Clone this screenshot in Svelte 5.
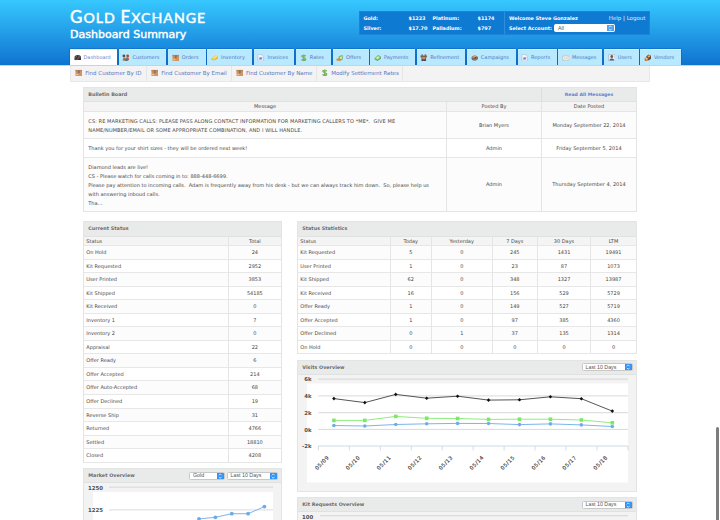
<script>
  const tabs = [
    { label: 'Dashboard', icon: 'gauge', w: 47 },
    { label: 'Customers', icon: 'people', w: 47.5 },
    { label: 'Orders', icon: 'box', w: 37.3 },
    { label: 'Inventory', icon: 'gold', w: 44.7 },
    { label: 'Invoices', icon: 'doc', w: 40.5 },
    { label: 'Rates', icon: 'dollar', w: 34.3 },
    { label: 'Offers', icon: 'offer', w: 36 },
    { label: 'Payments', icon: 'cash', w: 44.5 },
    { label: 'Refinement', icon: 'plant', w: 48.7 },
    { label: 'Campaigns', icon: 'ball', w: 48.3 },
    { label: 'Reports', icon: 'doc', w: 39 },
    { label: 'Messages', icon: 'mail', w: 44 },
    { label: 'Users', icon: 'user', w: 34.3 },
    { label: 'Vendors', icon: 'vendor', w: 40.7 }
  ];
  const links = [
    { label: 'Find Customer By ID', icon: 'box', w: 76 },
    { label: 'Find Customer By Email', icon: 'box', w: 84.7 },
    { label: 'Find Customer By Name', icon: 'box', w: 85.2 },
    { label: 'Modify Settlement Rates', icon: 'dollar', w: 86.6 }
  ];
  const current = [
    ['On Hold', 24], ['Kit Requested', 2952], ['User Printed', 3853], ['Kit Shipped', 54185],
    ['Kit Received', 0], ['Inventory 1', 7], ['Inventory 2', 0], ['Appraisal', 22],
    ['Offer Ready', 6], ['Offer Accepted', 214], ['Offer Auto-Accepted', 68], ['Offer Declined', 19],
    ['Reverse Ship', 31], ['Returned', 4766], ['Settled', 18810], ['Closed', 4208]
  ];
  const statHead = ['Status', 'Today', 'Yesterday', '7 Days', '30 Days', 'LTM'];
  const stats = [
    ['Kit Requested', 5, 0, 245, 1431, 19491],
    ['User Printed', 1, 0, 23, 87, 1073],
    ['Kit Shipped', 62, 0, 348, 1327, 13987],
    ['Kit Received', 16, 0, 156, 529, 5729],
    ['Offer Ready', 1, 0, 149, 527, 5719],
    ['Offer Accepted', 1, 0, 97, 385, 4360],
    ['Offer Declined', 0, 1, 37, 135, 1314],
    ['On Hold', 0, 0, 0, 0, 0]
  ];
  // chart coordinates are relative to the top left corner of the chart area
  const step = 30.93;
  const xs = Array.from({ length: 10 }, (_, i) => 35.9 + i * step);
  const dates = ['05/09', '05/10', '05/11', '05/12', '05/13', '05/14', '05/15', '05/16', '05/17', '05/18'];
  const black = [24.2, 28.2, 20, 23.8, 21.8, 25.7, 25.4, 22.4, 24.3, 36.7];
  const green = [46, 46, 42, 43.9, 44.1, 45, 44.8, 44.8, 45.6, 48.4];
  const blue = [51.1, 51.6, 50.1, 49.4, 49, 49.1, 50.2, 49.5, 50.5, 52.1];
  const ylabels = [['6k', 4.7], ['4k', 21.5], ['2k', 38.3], ['0k', 55], ['-2k', 71.6]];
  const market = [[115, 35.9], [131.4, 34.3], [147.8, 30.7], [164.1, 30.7], [180.4, 23.6]];
  const line = (ys) => ys.map((y, i) => `${xs[i]},${y}`).join(' ');
</script>

{#snippet icon(kind)}
  <svg class="icon" viewBox="0 0 16 16">
    {#if kind === 'gauge'}
      <path d="M1 13V8a7 6 0 0 1 14 0v5z" fill="#343638" /><path d="M3 8l3-4M10 4l3 4" stroke="#8b8f94" stroke-width="1.5" /><path d="M7 12l3-5" stroke="#e34b43" stroke-width="2" /><rect x="2" y="11" width="4" height="2" fill="#b13b39" />
    {:else if kind === 'people'}
      <path d="M1 14l2-6 4-1 2 4 2-4 4 1v5l-4 2z" fill="#a67745" /><path d="M7 15l1-8 4 1-1 7z" fill="#536b82" /><circle cx="4" cy="4" r="3" fill="#475160" /><circle cx="12" cy="4" r="3" fill="#a64c32" /><circle cx="8" cy="7" r="2.4" fill="#eebc87" />
    {:else if kind === 'box'}
      <path d="M1 2h14v13H1z" fill="#d2955f" /><path d="M1 2h14v3H1z" fill="#b98660" /><path d="M6 3h4v6H6z" fill="#8d6f5d" /><path d="M2 12h5" stroke="#f3cb9f" stroke-width="2" />
    {:else if kind === 'gold'}
      <path d="M1 9l9-6 6 2-2 5-8 4-5-2z" fill="#e2b735" /><path d="M2 9l8-5 5 1-8 5z" fill="#ffe876" /><path d="M5 13l2-3" stroke="#fff5ba" />
    {:else if kind === 'doc'}
      <path d="M2 1h8l4 4v10H2z" fill="#f5f6fc" stroke="#9da7c2" /><path d="M10 1v4h4" fill="#c6cfe2" /><path d="M5 7h6v5H5z" fill="#819fd2" /><path d="M6 12V9l2 1 3-3" stroke="#5376b6" fill="none" />
    {:else if kind === 'dollar'}
      <path d="M12 5C11 2 4 2 4 5s8 2.500 8 6-7 3.500-8.500 0M8 1v14" fill="none" stroke="#74ac58" stroke-width="3" /><path d="M11 5C10 3 5 3 5 5s7 3 6.500 6" fill="none" stroke="#a3cf86" />
    {:else if kind === 'offer'}
      <path d="M5 6l6-4 4 4-1 6-6 3z" fill="#78b96b" /><path d="M8 7l4-2 1 4-4 2z" fill="#d7f0bf" /><path d="M1 10l5-1 6 2-4 4-7-1z" fill="#df8b3f" /><path d="M11 2h4v4z" fill="#d5ba4d" />
    {:else if kind === 'cash'}
      <path d="M1 9l8-7 6 4v4l-8 5-6-4z" fill="#67a766" /><path d="M2 9l7-6 5 4-7 5z" fill="#a9d894" /><circle cx="8" cy="8" r="2" fill="#dff0cf" />
    {:else if kind === 'plant'}
      <path d="M1 3h14v4h-2v8H3V7H1z" fill="#806051" /><path d="M3 3V1h3v2M10 3V1h3v2" fill="#48403e" /><path d="M5 7h6v3H5z" fill="#f0a15b" /><path d="M4 12h3v3H4zM9 12h3v3H9z" fill="#373c46" />
    {:else if kind === 'ball'}
      <ellipse cx="8" cy="8.500" rx="7" ry="5.500" fill="#746b67" /><path d="M2 7l5-4 6 2-5 4z" fill="#c7a485" /><path d="M4 12l5-3 5 1-4 4z" fill="#bc6842" /><circle cx="9" cy="8" r="1.700" fill="#333" />
    {:else if kind === 'mail'}
      <rect x="1" y="4" width="14" height="10" rx="1" fill="#f2f2e9" stroke="#a7b4b8" /><path d="M2 5l6 5 6-5M2 13l4-4M14 13l-4-4" fill="none" stroke="#b7b9b5" />
    {:else if kind === 'user'}
      <rect x="1" y="1" width="14" height="14" rx="1" fill="#e7edf5" stroke="#8da2b8" /><circle cx="8" cy="6" r="3" fill="#9b623e" /><path d="M3 14c0-6 10-6 10 0z" fill="#315c92" /><path d="M5 5q3-5 6 0z" fill="#403531" />
    {:else}
      <path d="M5 5l5-4 5 3v6l-5 4-5-3z" fill="#5e473c" /><path d="M7 5l4-3 3 3-4 3z" fill="#eba75d" /><path d="M1 9l5-2 4 3-3 5H2z" fill="#c87834" /><path d="M3 9l3-1 2 2-3 2z" fill="#f1d593" />
    {/if}
  </svg>
{/snippet}

{#snippet select(label, cls)}
  <div class="select {cls}">
    <span>{label}</span>
    <svg viewBox="0 0 7 8"><path d="M2 3.300L3.500 1.700 5 3.300M2 4.900l1.500 1.600L5 4.900" fill="none" stroke="#fff" stroke-width=".8" /></svg>
  </div>
{/snippet}

<div class="page">
  <header>
    <div class="wrap">
      <div class="top">
        <div class="brand">
          <div class="name"><span>G</span>OLD <span>E</span>XCHANGE</div>
          <h1>Dashboard Summary</h1>
        </div>
        <div class="info">
          <div class="prices">
            <div><b class="c1">Gold:</b><b class="c2">$1223</b><b class="c3">Platinum:</b><b>$1174</b></div>
            <div><b class="c1">Silver:</b><b class="c2">$17.70</b><b class="c3">Palladium:</b><b>$797</b></div>
          </div>
          <div class="account">
            <div><b>Welcome Steve Gonzalez</b><span class="right"><i>Help</i> <em>|</em> <i>Logout</i></span></div>
            <div><b>Select Account:</b>{@render select('All', 'acct')}</div>
          </div>
        </div>
      </div>
      <nav>
        {#each tabs as t, i}
          <div class="tab" class:active={i === 0} style:width="{t.w}px">{@render icon(t.icon)}<span>{t.label}</span></div>
        {/each}
      </nav>
    </div>
  </header>

  <div class="wrap body">
    <div class="subnav">
      {#each links as l}
        <div class="link" style:width="{l.w}px">{@render icon(l.icon)}<span>{l.label}</span></div>
      {/each}
    </div>

    <main>
      <section class="board">
        <div class="head"><b>Bulletin Board</b><b class="all">Read All Messages</b></div>
        <div class="brow th"><div>Message</div><div>Posted By</div><div>Date Posted</div></div>
        <div class="brow r1 odd">
          <div>CS: RE MARKETING CALLS: PLEASE PASS ALONG CONTACT INFORMATION FOR MARKETING CALLERS TO *ME*.&nbsp; GIVE ME<br />NAME/NUMBER/EMAIL OR SOME APPROPRIATE COMBINATION, AND I WILL HANDLE.</div>
          <div>Brian Myers</div><div>Monday September 22, 2014</div>
        </div>
        <div class="brow r2">
          <div>Thank you for your shirt sizes - they will be ordered next week!</div>
          <div>Admin</div><div>Friday September 5, 2014</div>
        </div>
        <div class="brow r3 odd">
          <div>Diamond leads are live!<br />CS - Please watch for calls coming in to: 888-448-6699.<br />Please pay attention to incoming calls.&nbsp; Adam is frequently away from his desk - but we can always track him down.&nbsp; So, please help us<br />with answering inboud calls.<br />Tha...</div>
          <div>Admin</div><div>Thursday September 4, 2014</div>
        </div>
      </section>

      <div class="cols">
        <div class="left">
          <section class="table">
            <div class="head"><b>Current Status</b></div>
            <div class="row two th"><div>Status</div><div>Total</div></div>
            {#each current as r, i}
              <div class="row two" class:odd={i % 2 === 0}><div>{r[0]}</div><div>{r[1]}</div></div>
            {/each}
          </section>
          <section class="panel market">
            <div class="head"><b>Market Overview</b>{@render select('Gold', 'gold')}{@render select('Last 10 Days', 'days')}</div>
            <svg class="chart" width="197" height="60" viewBox="0 0 197 60">
              <rect x="9" y="9" width="180" height="51" fill="#fff" />
              <path d="M25 4.200h164M25 26.900h164" stroke="#ccc" stroke-width=".7" />
              <text x="4" y="7">1250</text><text x="4" y="29.300">1225</text>
              <polyline points={market.map((p) => p.join(',')).join(' ')} class="ln" stroke="#7cb5ec" />
              {#each market as p}<circle cx={p[0]} cy={p[1]} r="1.900" fill="#6fa9e8" />{/each}
            </svg>
          </section>
        </div>
        <div class="rightcol">
          <section class="table">
            <div class="head"><b>Status Statistics</b></div>
            <div class="row six th">{#each statHead as h}<div>{h}</div>{/each}</div>
            {#each stats as r, i}
              <div class="row six" class:odd={i % 2 === 0}>{#each r as c}<div>{c}</div>{/each}</div>
            {/each}
          </section>
          <section class="panel visits">
            <div class="head"><b>Visits Overview</b>{@render select('Last 10 Days', 'days')}</div>
            <svg class="chart" width="338" height="116" viewBox="0 .6 338 116">
              <rect x="9" y="9" width="321" height="99" fill="#fff" />
              <path d="M20.300 4.700H330M20.300 21.500H330M20.300 38.300H330M20.300 55H330" stroke="#c8c8c8" stroke-width=".7" />
              <path d="M20.300 71.600H330" stroke="#c0d0e0" stroke-width=".8" />
              {#each Array(11) as _, i}<path d="M{20.4 + i * 30.95} 71.600v4.500" stroke="#c0d0e0" stroke-width=".7" />{/each}
              {#each ylabels as [t, y]}<text x="13.500" y={y + 2.4} text-anchor="end">{t}</text>{/each}
              {#each dates as d, i}<text class="date" text-anchor="end" transform="translate({xs[i] - 4.4} 83.500) rotate(-45)">{d}</text>{/each}
              <polyline points={line(blue)} class="ln" stroke="#7cb5ec" />
              <polyline points={line(black)} class="ln" stroke="#555" />
              <polyline points={line(green)} class="ln" stroke="#90ed7d" />
              {#each xs as x, i}
                <circle cx={x} cy={blue[i]} r="1.800" fill="#70ace9" />
                <path d="M{x} {black[i] - 1.8}l1.800 1.800-1.800 1.800-1.800-1.800z" fill="#111" />
                <rect x={x - 1.8} y={green[i] - 1.8} width="3.600" height="3.600" fill="#7de867" />
              {/each}
            </svg>
          </section>
          <section class="panel kits">
            <div class="head"><b>Kit Requests Overview</b>{@render select('Last 10 Days', 'days')}</div>
            <svg class="chart" width="338" height="20" viewBox="0 0 338 20">
              <path d="M22 3.700h308" stroke="#c8c8c8" stroke-width=".7" />
              <text x="4" y="6.600">100</text>
            </svg>
          </section>
        </div>
      </div>
    </main>
  </div>
  <div class="thumb"></div>
</div>

<style>
  :global(body) { margin: 0; overflow: hidden; }
  .page { position: relative; width: 720px; height: 520px; overflow: hidden; background: #fff; color: #484848; font: 5.020px/9px "DejaVu Sans", Verdana, sans-serif; }
  .page :global(*) { box-sizing: border-box; }
  header { height: 65.500px; background: linear-gradient(#37c8ff, #0f73d0); border-bottom: .7px solid #b5d8f5; }
  .wrap { width: 580px; margin-left: 70px; }
  header .wrap { width: 640px; }
  .top { display: flex; height: 49px; }
  .brand { width: 289px; color: #fff; white-space: nowrap; padding-top: 8px; }
  .name { height: 19px; font: 500 14.200px/19px Lato, sans-serif; letter-spacing: .980px; -webkit-text-stroke: .35px #fff; }
  .name span { font-size: 17px; line-height: 18px; }
  h1 { margin: 1px 0 0; font: 11px/14px "DejaVu Sans", sans-serif; -webkit-text-stroke: .45px #fff; }
  .info { display: flex; width: 291px; height: 24px; margin-top: 11px; background: #0f7ad2; border: 1px solid #1b84d8; color: #fff; white-space: nowrap; font-size: 4.900px; }
  .prices { width: 145px; border-right: 1px solid #2f8fdd; padding: 2px 0 0 3.500px; }
  .prices > div, .account > div { display: flex; align-items: center; height: 9.500px; }
  .c1 { width: 45px; }
  .c2 { width: 24px; }
  .c3 { width: 45px; }
  .account { flex: 1; padding: 2px 3.500px 0 4px; }
  .right { margin-left: auto; font-size: 5.500px; }
  .right i { font-style: normal; color: #d5efff; }
  .right em { font-style: normal; }
  nav { display: flex; gap: 1.880px; height: 16px; }
  .tab { display: flex; align-items: center; flex: none; height: 16px; padding-left: 3.500px; background: #b8e9ff; border-top: 1px solid #d5f3ff; box-shadow: -.5px -.5px 0 #0b62c4, .5px 0 0 #0b62c4; color: #4d78c4; white-space: nowrap; }
  .tab.active { background: #fff; color: #6f80c8; }
  .icon { width: 7.500px; height: 7.500px; flex: none; margin-right: 2.500px; }
  .body { height: 454px; }
  .subnav { display: flex; height: 16px; background: #f3f3f3; border: .8px solid #e8e8e8; border-top: 0; }
  .link { display: flex; align-items: center; flex: none; padding-left: 4px; border-right: 1px solid #e6e6e6; color: #5577c5; font-size: 5.500px; white-space: nowrap; }
  .link .icon { margin-right: 2.800px; }
  main { padding: 5.500px 13px 0; }
  section { border: 1px solid #e3e5e5; white-space: nowrap; }
  .board { height: 125px; width: 554px; }
  .head { display: flex; align-items: center; height: 14.500px; padding-left: 4.300px; background: #e9ebeb; border-bottom: 1px solid #e0e2e2; color: #6c6c6c; font-size: 4.850px; }
  .board .head { height: 14px; }
  .all { width: 95px; height: 100%; margin-left: auto; display: flex; align-items: center; justify-content: center; border-left: 1px solid #dcdede; color: #5b80ce; font-size: 4.600px; }
  .brow { display: flex; border-bottom: 1px solid #e5e5e5; }
  .brow > div { display: flex; align-items: center; justify-content: center; width: 95px; border-left: 1px solid #e4e4e4; }
  .brow > div:first-child { display: block; width: 362px; padding-left: 4.300px; border: 0; }
  .th { background: #f4f4f4; }
  .brow.th { height: 10px; }
  .brow.th > div:first-child { text-align: center; padding: 0; }
  .odd { background: #fcfcfc; }
  .r1 { height: 27px; padding: 0; }
  .r1 > div:first-child { padding-top: 4.500px; letter-spacing: .08px; }
  .r2 { height: 19px; }
  .r2 > div:first-child { padding-top: 5px; }
  .r3 { height: 54px; }
  .r3 > div:first-child { padding-top: 4.500px; }
  .cols { display: flex; gap: 15px; margin-top: 9px; }
  .left { width: 199.500px; }
  .rightcol { width: 340px; }
  .table { border-bottom: 0; }
  .row { display: grid; height: 13.560px; border-bottom: 1px solid #e7e7e7; line-height: 13px; font-size: 5px; }
  .row.th { height: 9.500px; line-height: 9px; }
  .two { grid-template-columns: 143.700px 1fr; }
  .six { grid-template-columns: 91.500px 41.500px 60.500px 45.500px 53px 1fr; }
  .row > div { text-align: center; border-left: 1px solid #e5e5e5; }
  .row > div:first-child { text-align: left; padding-left: 2.300px; border: 0; }
  .panel { margin-top: 5.500px; background: #f3f3f3; }
  .visits { height: 132px; }
  .kits { height: 40px; }
  .market { height: 70px; }
  .panel .head { height: 14px; padding-right: 3.500px; }
  .head b { margin-right: auto; }
  .head .all { margin-right: 0; }
  .select { display: flex; align-items: center; height: 8px; background: #fff; border: .6px solid #c8c8c8; border-radius: 1.500px; padding-left: 3px; color: #555; font: 5.300px/7px "Liberation Sans", Arial, sans-serif; overflow: hidden; }
  .select svg { width: 6.500px; height: 8px; flex: none; margin-left: auto; background: #3392f7; }
  .days { width: 51px; }
  .gold { width: 35.500px; margin-right: 2px; }
  .acct { width: 61px; margin-left: 2px; border-color: #fff; }
  .acct svg { background: #4da0f5; }
  .chart { display: block; }
  .chart text { font: bold 5.400px "DejaVu Sans", sans-serif; fill: #505050; }
  .chart .date { font: 5.200px "DejaVu Sans", sans-serif; fill: #444; letter-spacing: .5px; stroke: #444; stroke-width: .15px; }
  .ln { fill: none; stroke-width: 1; }
  .thumb { position: absolute; left: 716px; top: 427px; width: 3px; height: 100px; border-radius: 1.500px; background: #7c7c7c; }
</style>
